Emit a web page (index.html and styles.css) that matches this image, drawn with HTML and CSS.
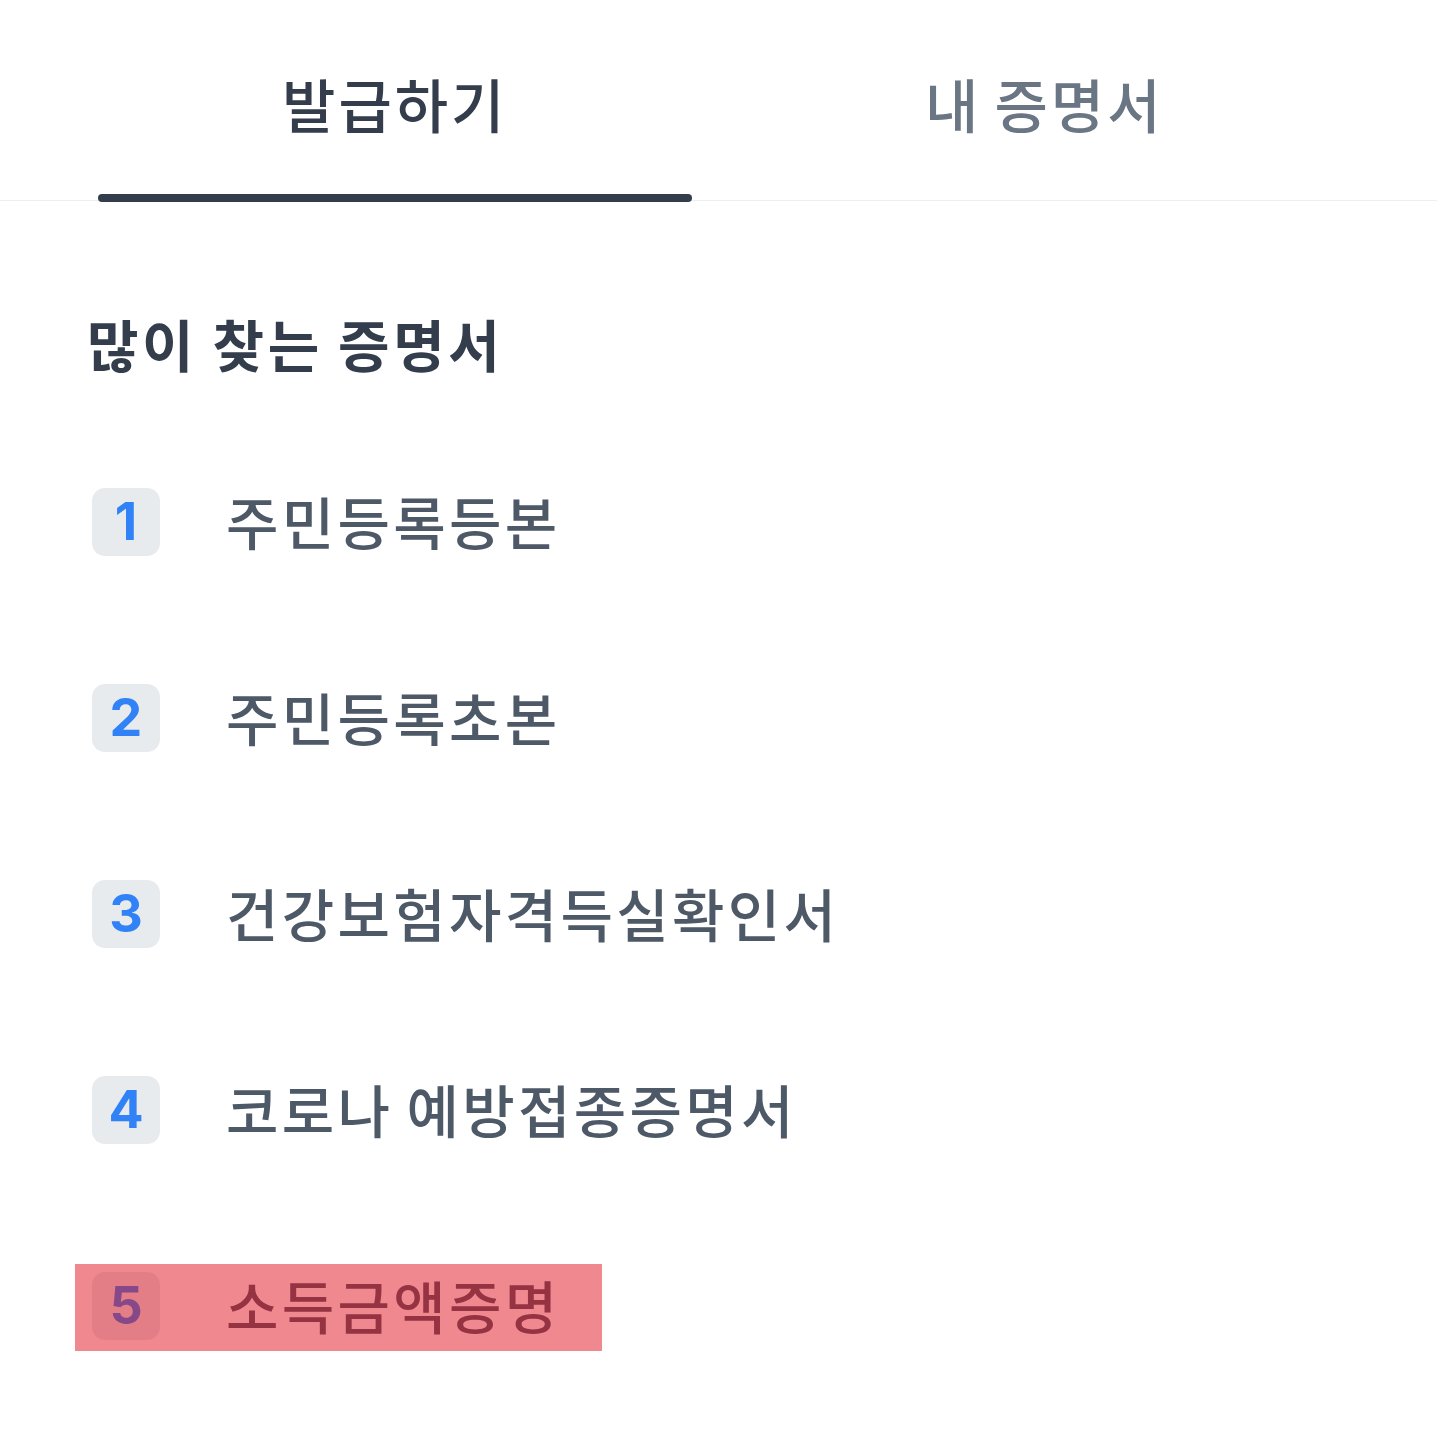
FILE: index.html
```html
<!DOCTYPE html>
<html lang="ko">
<head>
<meta charset="utf-8">
<title>증명서</title>
<link rel="stylesheet" href="styles.css">
</head>
<body>
<nav class="tabs">
  <div class="tab active">발급하기</div>
  <div class="tab">내 증명서</div>
</nav>
<main class="content">
  <h2 class="heading">많이 찾는 증명서</h2>
  <ul class="list">
    <li class="row"><span class="badge">1</span><span class="label">주민등록등본</span></li>
    <li class="row"><span class="badge">2</span><span class="label">주민등록초본</span></li>
    <li class="row"><span class="badge">3</span><span class="label">건강보험자격득실확인서</span></li>
    <li class="row"><span class="badge">4</span><span class="label">코로나 예방접종증명서</span></li>
    <li class="row"><span class="badge">5</span><span class="label">소득금액증명</span><span class="highlight"></span></li>
  </ul>
</main>
</body>
</html>
```

FILE: styles.css
```css
* { box-sizing: border-box; }
body {
  margin: 0;
  background: #ffffff;
  font-family: "Noto Sans CJK KR", "Noto Sans", sans-serif;
}
.tabs {
  display: flex;
  gap: 56px;
  padding: 0 96px 0 98px;
  border-bottom: 1px solid #eceef1;
}
.tab {
  position: relative;
  flex: 1;
  height: 200px;
  padding-top: 74px;
  text-align: center;
  font-size: 58px;
  line-height: 1;
  font-weight: 500;
  color: #6b7684;
  letter-spacing: 3px;
  word-spacing: -6px;
}
.tab.active { color: #333d4b; }
.tab.active::after {
  content: "";
  position: absolute;
  left: 0;
  right: 0;
  bottom: -2px;
  height: 8px;
  border-radius: 4px;
  background: #333d4b;
}
.content {
  padding-left: 92px;
}
.heading {
  margin: 114px 0 0 -5px;
  font-size: 56px;
  line-height: 1;
  font-weight: 700;
  color: #333d4b;
  letter-spacing: 3.6px;
  word-spacing: -4px;
}
.list {
  list-style: none;
  margin: 53px 0 0;
  padding: 0;
}
.row {
  position: relative;
  display: flex;
  align-items: center;
  height: 196px;
}
.badge {
  display: flex;
  align-items: center;
  justify-content: center;
  width: 68px;
  height: 68px;
  border-radius: 13px;
  background: #e8ebee;
  color: #3182f6;
  font-family: Inter, Roboto, sans-serif;
  font-weight: 700;
  font-size: 52px;
  line-height: 1;
}
.label {
  margin-left: 66px;
  font-size: 57px;
  line-height: 1;
  font-weight: 500;
  color: #4e5968;
  letter-spacing: 3.3px;
  word-spacing: -6px;
  position: relative;
  top: -2px;
}
.highlight {
  position: absolute;
  left: -17px;
  top: 56px;
  width: 527px;
  height: 87px;
  background: rgba(224, 12, 26, 0.49);
}
```
